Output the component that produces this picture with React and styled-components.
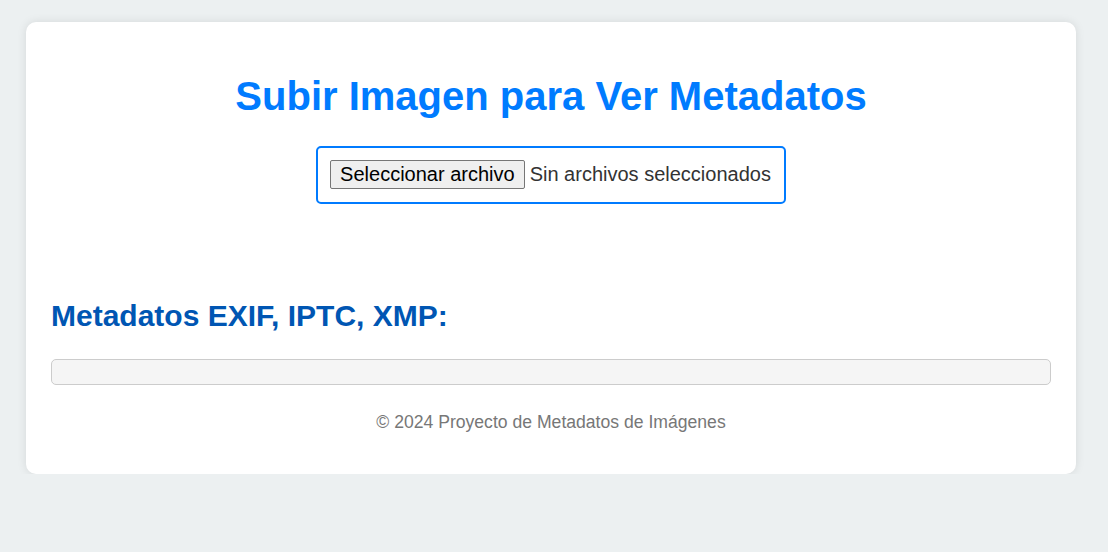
import React from 'react';
import styled, { createGlobalStyle } from 'styled-components';

const GlobalStyle = createGlobalStyle`
  body {
    margin: 0;
    background: #ecf0f1;
    font-family: Arial, "Liberation Sans", sans-serif;
    color: #333;
  }
`;

const Page = styled.div`
  padding: 22px 32px 0 26px;
`;

const Card = styled.div`
  width: 1050px;
  box-sizing: border-box;
  background: #fff;
  border-radius: 10px;
  padding: 25px 25px 41px;
  box-shadow: 0 0 10px rgba(0, 0, 0, 0.1);
`;

const Title = styled.h1`
  margin: 26px 0 0;
  text-align: center;
  color: #007bff;
  font-size: 40px;
  font-weight: bold;
  line-height: 46px;
`;

const UploadRow = styled.div`
  display: flex;
  justify-content: center;
  margin-top: 27px;
`;

const FileLabel = styled.label`
  display: flex;
  align-items: center;
  gap: 5px;
  border: 2px solid #007bff;
  border-radius: 5px;
  padding: 12px 13px 13px 12px;
  font-size: 20px;
  color: #333;
  background: #fff;
  cursor: pointer;

  input {
    display: none;
  }
`;

const FakeButton = styled.span`
  display: inline-block;
  padding: 2px 9px;
  line-height: 23px;
  color: #000;
  background: #efefef;
  border: 1px solid #767676;
  border-radius: 2px;
`;

const FileName = styled.span`
  line-height: 23px;
`;

const SectionTitle = styled.h2`
  margin: 95px 0 0;
  color: #0056b3;
  font-size: 30px;
  line-height: 34px;
`;

const MetaBox = styled.div`
  margin-top: 26px;
  height: 24px;
  background: #f5f5f5;
  border: 1px solid #ccc;
  border-radius: 5px;
`;

const Footer = styled.footer`
  margin-top: 27px;
  text-align: center;
  color: #777;
  font-size: 17.6px;
`;

export default function App() {
  return (
    <>
      <GlobalStyle />
      <Page>
        <Card>
          <Title>Subir Imagen para Ver Metadatos</Title>
          <UploadRow>
            <FileLabel>
              <input type="file" accept="image/*" />
              <FakeButton>Seleccionar archivo</FakeButton>
              <FileName>Sin archivos seleccionados</FileName>
            </FileLabel>
          </UploadRow>
          <SectionTitle>Metadatos EXIF, IPTC, XMP:</SectionTitle>
          <MetaBox />
          <Footer>© 2024 Proyecto de Metadatos de Imágenes</Footer>
        </Card>
      </Page>
    </>
  );
}
